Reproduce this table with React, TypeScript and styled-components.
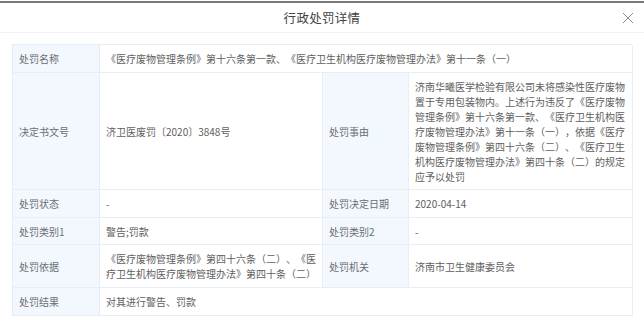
import styled, { createGlobalStyle } from "styled-components";

const GlobalStyle = createGlobalStyle`
  html, body {
    margin: 0;
    padding: 0;
    background: #fff;
  }
  body {
    font-family: "Noto Sans CJK SC", "Noto Sans", sans-serif;
    text-spacing-trim: space-all;
  }
`;

const Modal = styled.div`
  width: 644px;
  height: 329px;
  background: #fff;
  border-top: 2px solid #7a7a7a;
  margin-top: 1px;
  box-sizing: border-box;
`;

const Header = styled.div`
  position: relative;
  height: 29px;
  display: flex;
  align-items: center;
  justify-content: center;
  border-bottom: 1px solid #f1f3f5;
`;

const Title = styled.h3`
  margin: 0;
  font-size: 12.5px;
  font-weight: normal;
  color: #444;
  letter-spacing: 0.3px;
`;

const Close = styled.button`
  position: absolute;
  right: 10px;
  top: 9px;
  width: 12px;
  height: 12px;
  padding: 0;
  border: 0;
  background: none;
  display: flex;
`;

const Table = styled.div`
  margin: 11px 12px 0 12px;
  display: grid;
  grid-template-columns: 87px 223px 86px 224px;
  border-top: 1px solid #e8eef5;
  border-left: 1px solid #e8eef5;
  box-sizing: border-box;
  font-size: 10px;
  line-height: 15px;
`;

const Cell = styled.div<{ $label?: boolean; $span?: number }>`
  grid-column: ${(p) => (p.$span ? `span ${p.$span}` : "auto")};
  background: ${(p) => (p.$label ? "#f2f8fe" : "#fff")};
  color: ${(p) => (p.$label ? "#6a6d72" : "#606060")};
  padding: 6px 5px 5.6px 6px;
  border-right: 1px solid #e8eef5;
  border-bottom: 1px solid #e8eef5;
  display: flex;
  align-items: center;
  word-break: break-all;
  text-spacing-trim: space-all;
`;

const CloseIcon = () => (
  <svg width="12" height="12" viewBox="0 0 12 12">
    <path d="M1 1 L11 11 M11 1 L1 11" stroke="#8a8a8a" strokeWidth="1" fill="none" />
  </svg>
);

const reason =
  "济南华曦医学检验有限公司未将感染性医疗废物置于专用包装物内。上述行为违反了《医疗废物管理条例》第十六条第一款、《医疗卫生机构医疗废物管理办法》第十一条（一），依据《医疗废物管理条例》第四十六条（二）、《医疗卫生机构医疗废物管理办法》第四十条（二）的规定应予以处罚";

const App = () => {
  return (
    <>
      <GlobalStyle />
      <Modal>
        <Header>
          <Title>行政处罚详情</Title>
          <Close aria-label="关闭">
            <CloseIcon />
          </Close>
        </Header>
        <Table>
          <Cell $label>处罚名称</Cell>
          <Cell $span={3}>
            《医疗废物管理条例》第十六条第一款、《医疗卫生机构医疗废物管理办法》第十一条（一）
          </Cell>

          <Cell $label>决定书文号</Cell>
          <Cell>济卫医废罚〔2020〕3848号</Cell>
          <Cell $label>处罚事由</Cell>
          <Cell>{reason}</Cell>

          <Cell $label>处罚状态</Cell>
          <Cell>-</Cell>
          <Cell $label>处罚决定日期</Cell>
          <Cell>2020-04-14</Cell>

          <Cell $label>处罚类别1</Cell>
          <Cell>警告;罚款</Cell>
          <Cell $label>处罚类别2</Cell>
          <Cell>-</Cell>

          <Cell $label>处罚依据</Cell>
          <Cell>
            《医疗废物管理条例》第四十六条（二）、《医疗卫生机构医疗废物管理办法》第四十条（二）
          </Cell>
          <Cell $label>处罚机关</Cell>
          <Cell>济南市卫生健康委员会</Cell>

          <Cell $label>处罚结果</Cell>
          <Cell $span={3}>对其进行警告、罚款</Cell>
        </Table>
      </Modal>
    </>
  );
};

export default App;
